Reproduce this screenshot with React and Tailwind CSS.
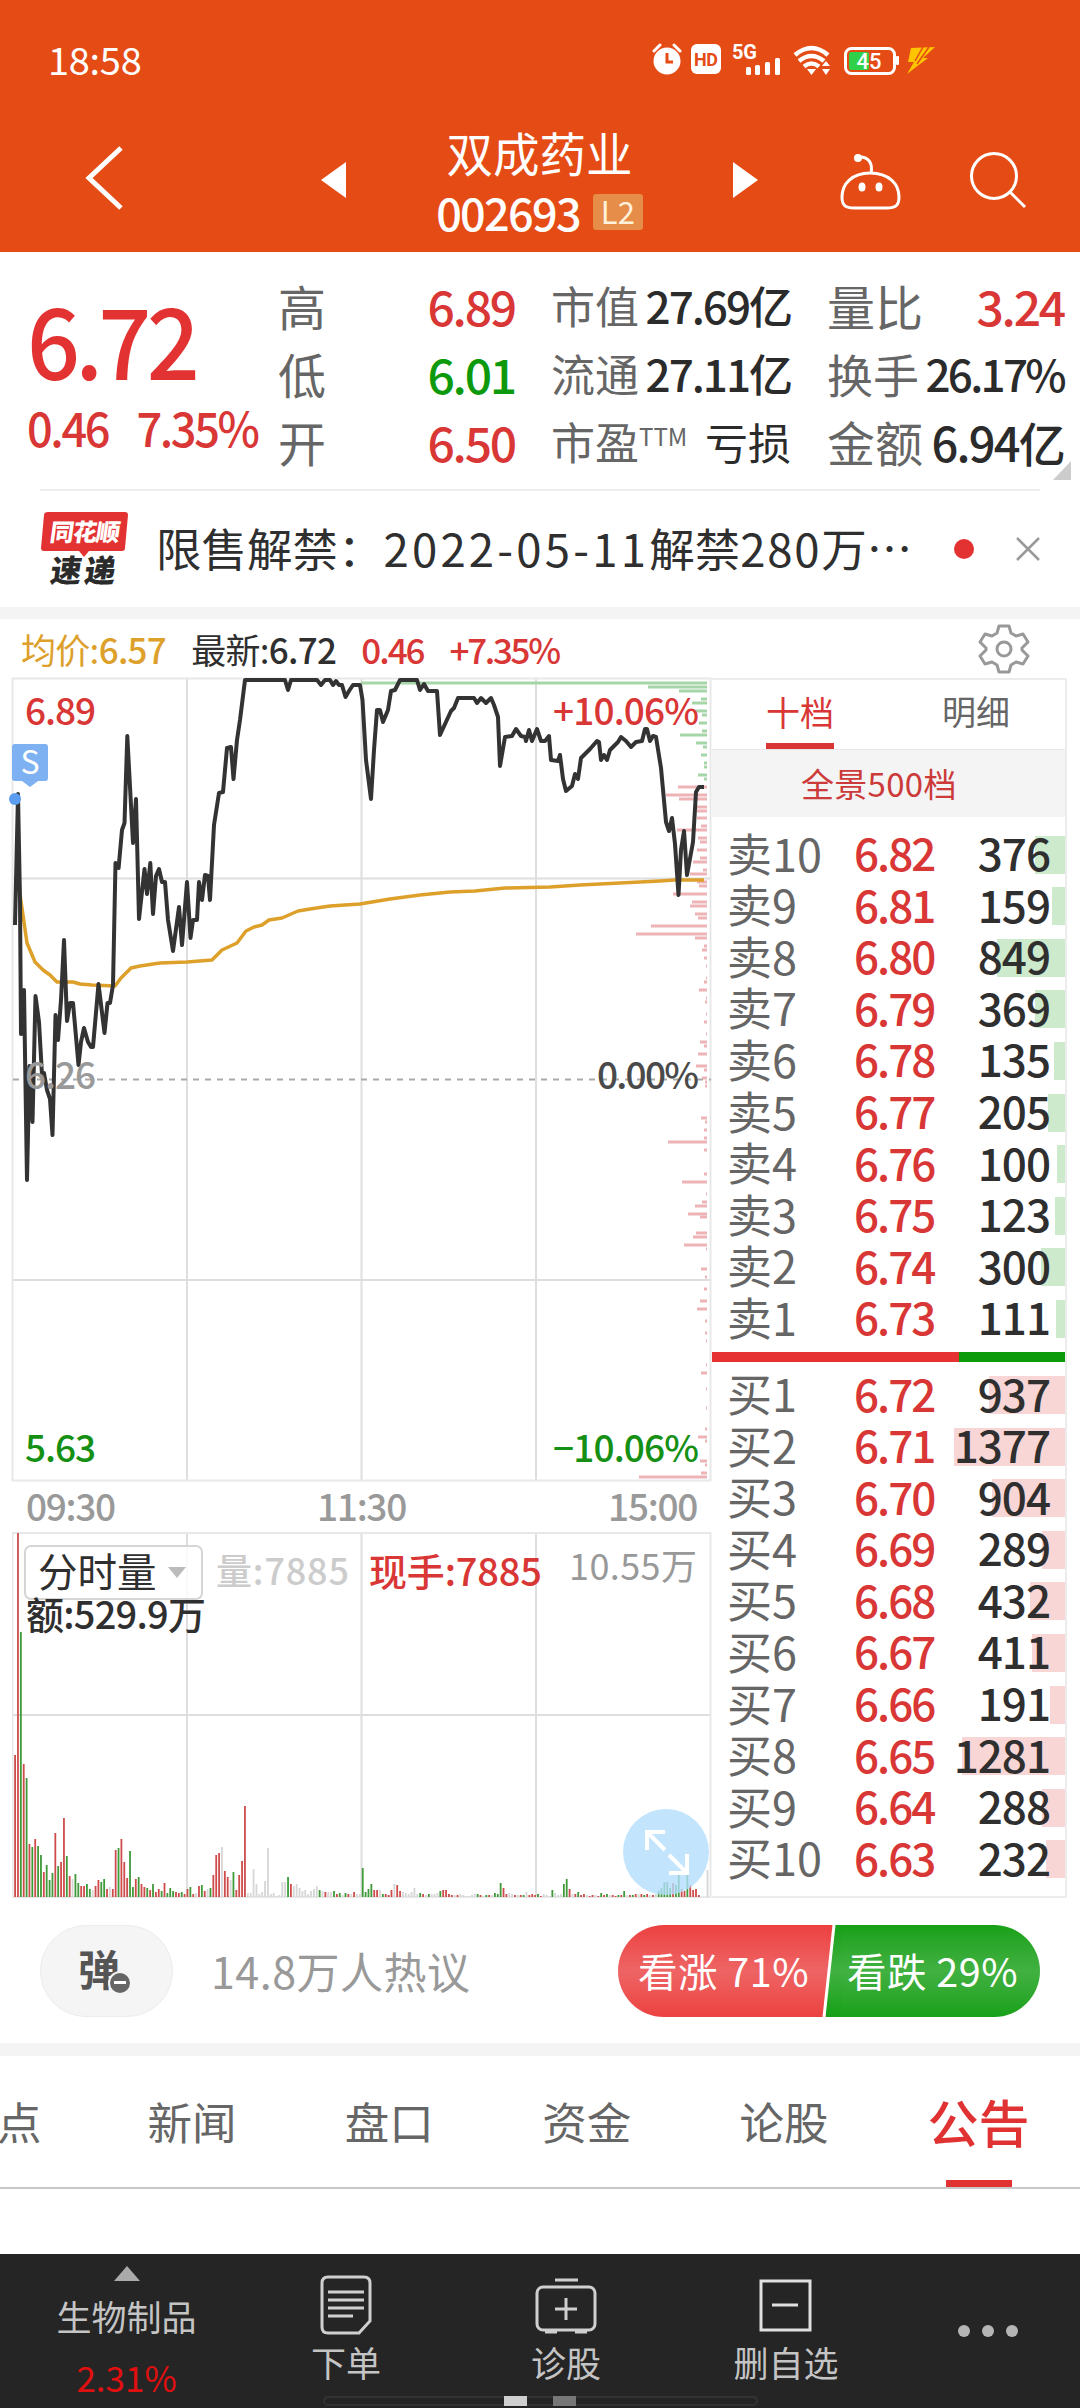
import clsx from "clsx";

const SELLS = [
  ["卖10", "6.82", 376],
  ["卖9", "6.81", 159],
  ["卖8", "6.80", 849],
  ["卖7", "6.79", 369],
  ["卖6", "6.78", 135],
  ["卖5", "6.77", 205],
  ["卖4", "6.76", 100],
  ["卖3", "6.75", 123],
  ["卖2", "6.74", 300],
  ["卖1", "6.73", 111],
];

const BUYS = [
  ["买1", "6.72", 937],
  ["买2", "6.71", 1377],
  ["买3", "6.70", 904],
  ["买4", "6.69", 289],
  ["买5", "6.68", 432],
  ["买6", "6.67", 411],
  ["买7", "6.66", 191],
  ["买8", "6.65", 1281],
  ["买9", "6.64", 288],
  ["买10", "6.63", 232],
];

const PRICE_POINTS =
  "15,925 18,794 20,900 21,1034 24,990 27,1180 29.5,1066 32.5,1122 35.5,996 39,1022 42,1075 44,1073 47,1090 50,1099 52.5,1135 55.5,1015 58,1040 61,1000 64,940 67,1021 70,1003 73,1003 78.5,1065 81,1042 84,1028 88,1042 91,1047 93,1047 98.5,984 104.5,1033 107.5,1003 110,1003 113,985 115.5,863 118.6,868 122,830 124.5,823 127.3,736 133,843 136,799 139,919 144.5,869 147,894 150.3,863 153,914 156,876 159,869 162,882 165,882 168,920 173,951 179,907 182,945 187,882 190.5,938 193,920 197,920 199,882 202,900 205,875 208,876 210,900 214,825 219,793 223,792 227,748 231,747 233.5,779 237,740 240,720 245,680 285,680 288,690 291,680 317,680 321,685 325,680 330,680 333,685 336,681 339,685 342,685 345.5,697 349,691 353,685 360,685 362.5,700 366,760 371,799 374,750 377,710 380,710 383,722 388,710 391,691 395,690 400,680 417,680 420,690 424,684 428,691 437,691 440,735 451,711 454,708 458,698 474,698 477,703 481,698 486,703 491,698 494,705 498,717 500,766 505,737 512,736 516,729 521,736 525,737 526,741 529,730 532,741 537,729 541,741 545,741 549,736 551,760 558,761 560,755 563,779 566,791 572,786 575,774 578,779 581,758 590,749 597,741 599,742 601,760 604,755 607,760 610,750 618,742 621,737 626,741 631,747 636,742 642,741 645,729 647,729 650,741 653,736 656,737 661,768 666,822 669,831 672,818 675,844 678.5,895 681,850 684,831 687,875 693,842 696,792 699,787 704,787";

const AVG_POINTS =
  "18,870 20,895 23,915 27,943 35,962 43,970 50,975 57,982 73,982 80,984 92,985 115,986 121,978 131,968 140,966 160,963 187,962 212,960 222,950 237,943 246,931 254,927 262,925 269,920 282,918 298,911 310,909 330,906 360,904 390,899 420,895 450,892 475,891 505,888 550,887 580,885 620,883 660,881 675,880 704,880";

// [y, width] of each level, measured from the right edge
const ASK_DEPTH = [
  [683, 346], [687, 59], [691, 28], [699, 6], [703, 15], [711, 12], [715, 5],
  [723, 8], [731, 5], [735, 27], [743, 11], [747, 4], [755, 6], [763, 3],
  [767, 3], [775, 9], [779, 3],
];

const BID_DEPTH = [
  [787, 29], [795, 41], [799, 28], [807, 10], [811, 10], [818, 10], [826, 6],
  [830, 30], [838, 9], [842, 7], [850, 10], [858, 7], [862, 14], [870, 4],
  [874, 17], [882, 10], [886, 8], [894, 34], [902, 15], [906, 17], [914, 12],
  [918, 9], [926, 56], [934, 71], [938, 12], [946, 3], [950, 5], [958, 3],
  [966, 1], [978, 1], [982, 3], [990, 8], [998, 1], [1002, 2], [1014, 1],
  [1022, 3], [1034, 1], [1042, 7], [1046, 3], [1054, 9], [1066, 11],
  [1070, 3], [1078, 5], [1082, 2], [1086, 2], [1118, 6], [1122, 2],
  [1130, 3], [1138, 3], [1142, 39], [1150, 3], [1174, 3], [1182, 25],
  [1194, 1], [1202, 5], [1206, 12], [1214, 19], [1217, 7], [1233, 11],
  [1237, 14], [1245, 23], [1249, 1], [1269, 6], [1277, 2], [1289, 3],
  [1301, 7], [1309, 10], [1321, 2], [1333, 2], [1341, 1], [1365, 1],
  [1373, 6], [1389, 1], [1408, 1], [1429, 2], [1437, 9], [1441, 2],
  [1461, 7], [1465, 2], [1473, 6], [1477, 68],
];

// r = up, g = down, n = unchanged
const VOLUMES =
  "r142 r364 g265 r133 g119 r53 g50 r58 g51 g42 r25 g32 g17 g24 r64 g31 r35 r79 g41 r21 n18 g23 g14 r11 r11 g13 g8 n7 r11 r17 g15 g18 r8 n10 r8 r47 g49 r58 r35 r19 g46 g10 r18 g20 r13 r10 g9 r7 g13 r5 r8 g6 r14 g4 g9 g6 r5 r4 g5 r3 r8 g10 r3 n4 r11 g12 r6 n8 g9 r22 r42 r44 n50 r26 r20 n17 g25 r7 r22 r36 r91 n4 n4 n28 n13 n3 n5 n16 n49 n3 n4 n1 n2 n15 n15 g20 r13 n11 n13 n9 n6 n7 n3 n6 n8 n11 g7 n6 r5 n5 n5 g6 r3 g4 n2 g4 r3 n3 r5 n3 n3 g29 g5 g8 g13 r7 r7 n7 g3 r3 r2 r7 n13 r12 r6 n5 n4 n3 n5 n9 n3 g4 r3 n2 g3 n3 n3 n4 g6 r7 r7 r3 r2 n2 r2 n3 n2 n1 n1 n2 n3 g3 r2 n1 g2 r2 n2 g4 g3 g14 r9 r3 n4 n3 r2 n2 r2 g2 n5 r2 r3 r2 g3 r1 n3 n2 n1 g7 n4 n2 n3 g13 g18 r8 n3 r3 g5 r2 r3 n2 r1 r2 n2 r1 g4 r2 g3 n2 r2 r1 g2 r2 g6 n2 r2 g2 r3 n3 r3 g2 r3 n2 r2 n3 g6 g9 g15 g15 g9 r14 g12 g22 r8 r6 g22 r12 r7 r8 r2 n0 n0 n27";

const VOLUME_COLORS = { r: "#cf4c4c", g: "#3f9a3a", n: "#d6d6d6" };

const TABS = ["新闻", "盘口", "资金", "论股"];

function StatusBar() {
  return (
    <div className="flex h-[118px] items-center pl-12 pr-[142px]">
      <span className="text-[38px] leading-none tracking-[-0.3px]">18:58</span>
      <svg className="ml-auto mt-0.5" width="288" height="34" viewBox="652 45 288 34" fill="none">
        <g stroke="#fff" strokeWidth="3" strokeLinecap="round">
          <path d="M656 53l6-6M682 53l-6-6" />
        </g>
        <circle cx="669" cy="63" r="13.5" fill="#fff" />
        <path d="M669 55v9h6" stroke="#e54c15" strokeWidth="3" />
        <rect x="693" y="46" width="30" height="30" rx="6" fill="#fff" />
        <text x="696" y="67.500" fontSize="18" fontWeight="700" fontFamily="Roboto" fill="#e54c15" textLength="24">
          HD
        </text>
        <text x="734" y="61" fontSize="20" fontWeight="700" fontFamily="Roboto" fill="#fff" textLength="25">
          5G
        </text>
        <g fill="#fff">
          <rect x="748" y="69" width="5" height="8" rx="1.5" />
          <rect x="757" y="67" width="5" height="10" rx="1.5" />
          <rect x="767" y="64" width="5" height="13" rx="1.5" />
          <rect x="777" y="60" width="5" height="17" rx="1.5" />
        </g>
        <g stroke="#fff" strokeWidth="4.500">
          <path d="M797 57q16.500-14 33 0" />
          <path d="M801 63q12.500-10 25 0" />
          <path d="M806 68.500q7.500-6 15 0" />
        </g>
        <path d="M809 71h9l-4.500 6zM824 68l4-5 4 5zM824 71h8l-4 6z" fill="#fff" />
        <rect x="847.500" y="50.500" width="49" height="25" rx="6" stroke="#fff" strokeWidth="3" />
        <rect x="851" y="54" width="20" height="18" rx="2" fill="#2fd14a" />
        <rect x="898" y="58" width="3" height="9" rx="1" fill="#fff" />
        <text x="871" y="71" textAnchor="middle" fontSize="22" fontWeight="500" fontFamily="Roboto" fill="#fff">
          45
        </text>
        <path d="M913 50l24-1-12 11h5l-21 16 7-12h-6z" fill="#ffc400" />
        <path d="M925 49l-8 14M931 49l-12 17" stroke="#e54c15" strokeWidth="1.500" />
      </svg>
    </div>
  );
}

function Header() {
  return (
    <header className="h-[252px] bg-[#e54c15] text-white">
      <StatusBar />
      <div className="flex h-[120px] items-center pl-[84px] pr-[52px]">
        <svg width="44" height="66" viewBox="0 0 44 66" fill="none" stroke="#fff" strokeWidth="5">
          <path d="M37 3L5 33l32 30" />
        </svg>
        <svg className="ml-[193px] mt-1" width="25" height="36" viewBox="0 0 25 36" fill="#fff">
          <path d="M25 0v36L0 18z" />
        </svg>
        <div className="flex w-[387px] flex-col items-center">
          <h1 className="text-[46.500px] leading-[50px]">双成药业</h1>
          <div className="mt-[17px] flex h-9 items-center gap-[13px]">
            <span className="text-[45px] font-medium leading-9 tracking-[-1.700px]">002693</span>
            <span className="rounded-[3px] bg-[#e68d49] px-[8px] pb-[3px] text-[31px] leading-[33px] text-[#fff2dc]">L2</span>
          </div>
        </div>
        <svg className="mt-1" width="25" height="36" viewBox="0 0 25 36" fill="#fff">
          <path d="M0 0v36l25-18z" />
        </svg>
        <svg className="ml-auto mt-2.5" width="64" height="62" viewBox="839 152 64 62" fill="none" stroke="#fff" strokeWidth="3">
          <path d="M870 173c-18 0-28 11-28 24 0 9 4 11 12 11h33c8 0 12-2 12-11 0-13-10-24-29-24z" />
          <path d="M871 173c2-9-2-16-11-16" />
          <circle cx="858" cy="158" r="4" fill="#fff" stroke="none" />
          <ellipse cx="862" cy="187" rx="3.500" ry="4.500" fill="#fff" stroke="none" />
          <ellipse cx="879" cy="187" rx="3.500" ry="4.500" fill="#fff" stroke="none" />
        </svg>
        <svg className="ml-[67px] mt-1" width="58" height="58" viewBox="970 151 58 58" fill="none" stroke="#fff" strokeWidth="3">
          <circle cx="994" cy="176" r="22.500" />
          <path d="M1010 192l15 15" />
        </svg>
      </div>
    </header>
  );
}

function Stat({ label, value, className, labelClass, valueClass }) {
  return (
    <div className="flex h-[68px] items-center justify-between leading-none">
      <span className={clsx("text-[#666]", labelClass)}>{label}</span>
      <span className={clsx("whitespace-nowrap font-medium", className || "text-[#2b2b2b]", valueClass)}>{value}</span>
    </div>
  );
}

function Quote() {
  return (
    <section className="relative flex h-[237px] bg-white pt-[19px]">
      <div className="w-[250px] pl-[27px] text-[#e33232]">
        <p className="mt-[20px] origin-left scale-x-[0.95] text-[98px] font-medium leading-[92px] tracking-[-5px]">6.72</p>
        <p className="mt-[19px] flex origin-left scale-x-[0.94] gap-[30px] whitespace-nowrap text-[48px] font-medium leading-[48px] tracking-[-2.500px] text-[#d93636]">
          <span>0.46</span>
          <span>7.35%</span>
        </p>
      </div>
      <div className="ml-[28px] w-[237px]">
        <Stat label="高" value="6.89" className="text-[#d93636]" labelClass="text-5xl" valueClass="text-[48px] tracking-[-2.200px]" />
        <Stat label="低" value="6.01" className="text-[#0c9a0c]" labelClass="text-5xl" valueClass="text-[48px] tracking-[-2.200px]" />
        <Stat label="开" value="6.50" className="text-[#d93636]" labelClass="text-5xl" valueClass="text-[48px] tracking-[-2.200px]" />
      </div>
      <div className="ml-9 w-[240px]">
        <Stat label="市值" value="27.69亿" labelClass="text-[44px]" valueClass="text-[44px] tracking-[-2px]" />
        <Stat label="流通" value="27.11亿" labelClass="text-[44px]" valueClass="text-[44px] tracking-[-2px]" />
        <Stat
          label={
            <>
              市盈<span className="align-[14px] text-[24px]">TTM</span>
            </>
          }
          value="亏损"
          labelClass="text-[44px] whitespace-nowrap"
          valueClass="text-[43px] !font-normal"
        />
      </div>
      <div className="ml-9 w-[237px]">
        <Stat label="量比" value="3.24" className="text-[#d93636]" labelClass="text-5xl" valueClass="text-[48px] tracking-[-2.200px]" />
        <Stat label="换手" value="26.17%" labelClass="text-[46px]" valueClass="text-[44px] tracking-[-2.700px]" />
        <Stat label="金额" value="6.94亿" labelClass="text-5xl" valueClass="text-[47px] tracking-[-1.800px]" />
      </div>
      <svg className="absolute right-[9px] top-[209px]" width="18" height="19" viewBox="0 0 18 19">
        <path d="M18 0v19H0z" fill="#ccc" />
      </svg>
    </section>
  );
}

function NewsStrip() {
  return (
    <section className="mx-10 flex h-[118px] items-center border-t-2 border-[#eee] text-[#2f2f2f]">
      <svg className="shrink-0" width="90" height="76" viewBox="41 510 90 76">
        <path d="M49 511h77q3 0 3 3l-3 33q0 3-3 3H90l-5 6-5-6H45q-3 0-3-3l3-33q0-3 4-3z" fill="#e33232" />
        <g fontFamily="'Noto Sans CJK SC'" fontWeight="900" transform="skewX(-8)">
          <text x="126" y="540" fontSize="24" fill="#fff" textLength="70">
            同花顺
          </text>
          <text x="132" y="581" fontSize="31" fill="#2b2b2b" textLength="65">
            速递
          </text>
        </g>
      </svg>
      <p className="ml-[26px] w-[762px] whitespace-nowrap pb-0.5 text-[45.500px] leading-none">
        限售解禁：<span className="tracking-[3.200px]">2022-05-11</span>解禁<span className="tracking-[1.800px]">280</span>万
        <span>…</span>
      </p>
      <span className="ml-[36px] size-5 shrink-0 rounded-full bg-[#e33232]" />
      <svg className="ml-auto shrink-0" width="24" height="24" viewBox="0 0 24 24" stroke="#999" strokeWidth="2.500">
        <path d="M1 1l22 22M23 1L1 23" />
      </svg>
    </section>
  );
}

function ChartLegend() {
  return (
    <div className="flex h-[59px] items-center whitespace-nowrap pl-[21px] pr-[50px] text-[35px] leading-none">
      <span className="tracking-[-0.700px] text-[#dda02b]">
        均价:<b className="font-medium">6.57</b>
      </span>
      <span className="ml-[25px] tracking-[-0.700px] text-[#2f2f2f]">
        最新:<b className="font-medium">6.72</b>
      </span>
      <span className="ml-[25px] font-medium tracking-[-2px] text-[#d93636]">0.46</span>
      <span className="ml-[26px] font-medium tracking-[-2.300px] text-[#d93636]">+7.35%</span>
      <svg className="ml-auto" width="52" height="52" viewBox="-26 -26 52 52" fill="none" stroke="#999" strokeWidth="3" strokeLinejoin="round">
        <path d="M-5-23H5L7-16 12-13 19-15 24-7 18-1V1L24 7 19 15 12 13 7 16 5 23H-5L-7 16-12 13-19 15-24 7-18 1V-1L-24-7-19-15-12-13-7-16z" />
        <circle r="7" />
      </svg>
    </div>
  );
}

function PriceChart() {
  return (
    <svg className="block overflow-visible" width="700" height="804" viewBox="12 678 700 804" fontFamily="'Noto Sans CJK SC'" fontWeight="500" fontSize="37">
      <g stroke="#dedede" strokeWidth="2">
        <path d="M187 678v803M361.500 678v803M536 678v803M12 878.500h699M12 1280h699" />
        <rect x="12.500" y="678.500" width="698" height="802" fill="none" stroke="#e8e8e8" />
      </g>
      <g fill="#a6d6a8">
        {ASK_DEPTH.map(([y, w]) => (
          <rect key={y} x={707 - w} y={y - 1.5} width={w} height="3" />
        ))}
      </g>
      <g fill="#edb3b5">
        {BID_DEPTH.map(([y, w]) => (
          <rect key={y} x={707 - w} y={y - 1.5} width={w} height="3" />
        ))}
      </g>
      <path d="M13 1079.500h698" stroke="#aaa" strokeWidth="2" strokeDasharray="6 6" />
      <polyline points={AVG_POINTS} fill="none" stroke="#dda02b" strokeWidth="3.500" strokeLinejoin="round" />
      <polyline points={PRICE_POINTS} fill="none" stroke="#333" strokeWidth="4" strokeLinejoin="round" />
      <circle cx="15" cy="799" r="6" fill="#5b9df0" />
      <path d="M15 744h30q3 0 3 3v31q0 3-3 3H38l-8 6-8-6H15q-3 0-3-3v-31q0-3 3-3z" fill="#7db1f2" />
      <text x="30" y="774" textAnchor="middle" fontSize="32" fontWeight="400" fill="#fff">
        S
      </text>
      <g fill="#d93636">
        <text x="25" y="725" textLength="71">6.89</text>
        <text x="553" y="725" textLength="146">+10.06%</text>
      </g>
      <text x="25" y="1089" textLength="71" fill="#999">6.26</text>
      <text x="597" y="1089" textLength="102" fill="#4a4a4a">0.00%</text>
      <g fill="#159015">
        <text x="25" y="1462" textLength="71">5.63</text>
        <text x="553" y="1462" textLength="146">−10.06%</text>
      </g>
    </svg>
  );
}

function VolumeChart() {
  return (
    <svg className="block" width="700" height="366" viewBox="12 1532 700 366" fontFamily="'Noto Sans CJK SC'" fontSize="36">
      <g stroke="#dedede" strokeWidth="2">
        <path d="M187 1533v364M361.500 1533v364M536 1533v364M12 1715h699" />
        <rect x="12.500" y="1533" width="698" height="364" fill="none" stroke="#e8e8e8" />
      </g>
      {VOLUMES.split(" ").map((v, i) => {
        const h = Number(v.slice(1));
        return <rect key={i} x={14.2 + i * 2.873} y={1897 - h} width="1.8" height={h} fill={VOLUME_COLORS[v[0]]} />;
      })}
      <rect x="25" y="1546" width="177" height="53" rx="6" fill="#fff" fillOpacity="0.8" stroke="#d5d5d5" strokeWidth="2" />
      <text x="38" y="1587" fontSize="39.500" fill="#2f2f2f">分时量</text>
      <path d="M168 1567h18l-9 11z" fill="#bbb" />
      <text x="216" y="1585" textLength="133" fill="#ccc" fontWeight="500">量:7885</text>
      <text x="369" y="1586" textLength="173" fontSize="38" fill="#d93636" fontWeight="500">现手:7885</text>
      <text x="569" y="1580" textLength="128" fill="#999">10.55万</text>
      <text x="26" y="1629" textLength="180" fontSize="38" fill="#2f2f2f" fontWeight="500">额:529.9万</text>
      <circle cx="666" cy="1852" r="43" fill="#b3defc" fillOpacity="0.8" />
      <g fill="none" stroke="#fff" strokeWidth="4">
        <path d="M665 1832h-18v18M648 1833l17 17M687 1854v19h-18M669 1855l17 17" />
      </g>
    </svg>
  );
}

function BookRow({ row, side }) {
  const [label, price, volume] = row;
  return (
    <div className="relative flex h-[51.560px] items-center pl-[15px] pr-[15px] leading-none">
      <div
        className={clsx("absolute right-0 h-[38px]", side === "sell" ? "bg-[#cdeacd]" : "bg-[#f9d6d6]")}
        style={{ width: volume * 0.0806 }}
      />
      <span className="relative w-[127px] pb-[5px] text-[45px] text-[#666]">{label}</span>
      <span className="relative pb-[5px] text-[44px] font-medium tracking-[-2px] text-[#d93636]">{price}</span>
      <span className="relative ml-auto pb-[5px] text-[44px] font-medium tracking-[-1px] text-[#2f2f2f]">{volume}</span>
    </div>
  );
}

function OrderBook() {
  return (
    <aside className="h-[1220px] w-[355px] border-r-2 border-b-2 border-t-2 border-[#ececec]">
      <div className="flex h-[70px] border-b border-[#e8e8e8] text-[34px] leading-none">
        <div className="ml-[54px] flex h-[69px] w-[68px] items-center justify-center border-b-[6px] border-[#d93636] text-[#d93636]">
          十档
        </div>
        <div className="ml-[108px] flex h-[62px] items-center text-[#666]">明细</div>
      </div>
      <div className="flex h-[67px] items-center bg-[#f4f4f4] pl-[89px] text-[33px] leading-none tracking-[0.300px] text-[#cc3a3a]">
        全景500档
      </div>
      <div className="pt-3">
        {SELLS.map((row) => (
          <BookRow key={row[0]} row={row} side="sell" />
        ))}
      </div>
      <div className="mb-[7px] mt-2 flex h-2.5 bg-[#0a9a0a]">
        <div className="w-[247px] bg-[#e63232]" />
      </div>
      <div>
        {BUYS.map((row) => (
          <BookRow key={row[0]} row={row} side="buy" />
        ))}
      </div>
    </aside>
  );
}

function Sentiment() {
  return (
    <section className="flex h-[145px] items-center pl-10 pr-10">
      <div className="flex h-[92px] w-[133px] items-center rounded-full border border-[#ececec] bg-[#f5f5f5] pl-[37px]">
        <span className="pb-1.5 text-[42px] font-bold leading-none text-[#555]">弹</span>
        <span className="-ml-3 mt-6 flex size-6 items-center justify-center rounded-full border-2 border-[#f5f5f5] bg-[#666]">
          <span className="h-[3px] w-3 bg-white" />
        </span>
      </div>
      <span className="ml-[38px] text-[43px] leading-none tracking-[0.500px] text-[#999]">14.8万人热议</span>
      <div className="relative ml-auto flex h-[92px] w-[422px] overflow-hidden rounded-full text-[39.500px] leading-[90px] tracking-[0.500px] text-white">
        <div className="w-[211px] bg-linear-to-b from-[#ec4040] via-[#ee6464] to-[#ec4040] pl-5">看涨 71%</div>
        <div className="flex-1 bg-linear-to-b from-[#16a016] via-[#41b141] to-[#16a016] pl-[18px]">看跌 29%</div>
        <svg className="absolute left-[200px] top-0" width="24" height="92" viewBox="0 0 24 92">
          <defs>
            <linearGradient id="up" x1="0" y1="0" x2="0" y2="1">
              <stop stopColor="#ec4040" />
              <stop offset="0.5" stopColor="#ee6464" />
              <stop offset="1" stopColor="#ec4040" />
            </linearGradient>
            <linearGradient id="down" x1="0" y1="0" x2="0" y2="1">
              <stop stopColor="#16a016" />
              <stop offset="0.5" stopColor="#41b141" />
              <stop offset="1" stopColor="#16a016" />
            </linearGradient>
          </defs>
          <rect x="8" width="16" height="92" fill="url(#down)" />
          <path d="M8 0h8L6 92H8z" fill="url(#up)" />
          <path d="M16 0L6 92" stroke="#fff" strokeWidth="3" />
        </svg>
      </div>
    </section>
  );
}

function NewsTabs() {
  return (
    <nav className="flex h-[133px] items-center whitespace-nowrap border-b-2 border-[#c8c8c8] text-[44.500px] leading-none text-[#666]">
      <span className="-ml-[3px] mr-[106px]">点</span>
      <div className="flex gap-[108.300px]">
        {TABS.map((tab) => (
          <span key={tab}>{tab}</span>
        ))}
      </div>
      <div className="relative ml-[99px] flex h-full items-center text-[51px] font-medium text-[#e03232]">
        公告
        <span className="absolute bottom-0 left-[19px] h-[7px] w-[66px] bg-[#e03232]" />
      </div>
    </nav>
  );
}

function BottomBar() {
  return (
    <footer className="relative mt-auto flex h-[154px] bg-[#252525] text-[35px] leading-none text-[#c4c4c4]">
      <div className="flex w-[253px] flex-col items-center pt-3">
        <svg width="26" height="15" viewBox="0 0 26 15" fill="#aaa">
          <path d="M13 0l13 15H0z" />
        </svg>
        <span className="mt-[17px]">生物制品</span>
        <span className="mt-[26px] text-[#e01010]">2.31%</span>
      </div>
      <div className="flex w-[186px] flex-col items-center pt-[21px]">
        <svg width="54" height="60" viewBox="0 0 54 60" fill="none" stroke="#cfcfcf" strokeWidth="3">
          <path d="M9 2h36q6 0 6 6v38L40 58H9q-6 0-6-6V8q0-6 6-6zM9 17h36M9 25h36M9 33h36M9 41h25" />
        </svg>
        <span className="mt-[9px]">下单</span>
      </div>
      <div className="flex w-[254px] flex-col items-center pt-[21px]">
        <svg width="62" height="60" viewBox="0 0 62 60" fill="none" stroke="#cfcfcf" strokeWidth="3">
          <rect x="2" y="12" width="58" height="43" rx="6" />
          <path d="M20 5h23M31 23v22M20 34h22M10 57h12M40 57h12" />
        </svg>
        <span className="mt-[9px]">诊股</span>
      </div>
      <div className="flex w-[186px] flex-col items-center pt-[21px]">
        <svg width="54" height="60" viewBox="0 0 54 60" fill="none" stroke="#e0e0e0" strokeWidth="3">
          <path d="M2 6h49v49H2zM13 30h26" />
        </svg>
        <span className="mt-[9px]">删自选</span>
      </div>
      <div className="flex items-center gap-3 pl-[79px]">
        <span className="size-3 rounded-full bg-[#b5b5b5]" />
        <span className="size-3 rounded-full bg-[#b5b5b5]" />
        <span className="size-3 rounded-full bg-[#b5b5b5]" />
      </div>
      <div className="absolute bottom-[2px] left-[323px] flex h-2.5 w-[435px] gap-[26px] rounded-full border-2 border-[#333] pl-[179px]">
        <span className="-mt-0.5 h-2.5 w-[23px] bg-[#cfcfcf]" />
        <span className="-mt-0.5 h-2.5 w-[23px] bg-[#777]" />
      </div>
    </footer>
  );
}

export default function App() {
  return (
    <div className="flex h-[2408px] w-[1080px] flex-col overflow-hidden bg-white font-['Noto_Sans_CJK_SC',sans-serif]">
      <Header />
      <Quote />
      <NewsStrip />
      <div className="h-3 bg-[#f4f4f4]" />
      <ChartLegend />
      <main className="flex h-[1220px] pl-3">
        <div className="w-[700px]">
          <PriceChart />
          <div className="flex h-[50px] items-center justify-between pb-1 pl-3.5 pr-[15px] text-[37px] font-medium leading-none tracking-[-1.300px] text-[#999]">
            <span>09:30</span>
            <span>11:30</span>
            <span>15:00</span>
          </div>
          <VolumeChart />
        </div>
        <OrderBook />
      </main>
      <Sentiment />
      <div className="h-[13px] bg-[#f4f4f4]" />
      <NewsTabs />
      <BottomBar />
    </div>
  );
}
